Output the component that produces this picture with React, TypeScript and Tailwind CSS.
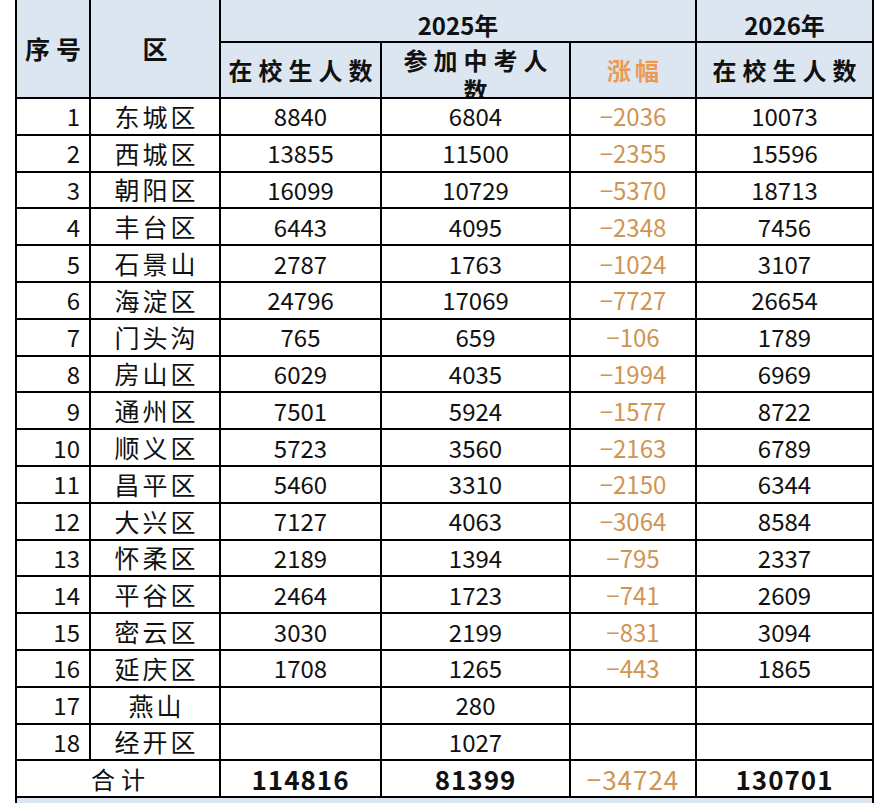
import React from "react";

type Row = [string, string, string, string, string, string];

const rows: Row[] = [
  ["1", "东城区", "8840", "6804", "−2036", "10073"],
  ["2", "西城区", "13855", "11500", "−2355", "15596"],
  ["3", "朝阳区", "16099", "10729", "−5370", "18713"],
  ["4", "丰台区", "6443", "4095", "−2348", "7456"],
  ["5", "石景山", "2787", "1763", "−1024", "3107"],
  ["6", "海淀区", "24796", "17069", "−7727", "26654"],
  ["7", "门头沟", "765", "659", "−106", "1789"],
  ["8", "房山区", "6029", "4035", "−1994", "6969"],
  ["9", "通州区", "7501", "5924", "−1577", "8722"],
  ["10", "顺义区", "5723", "3560", "−2163", "6789"],
  ["11", "昌平区", "5460", "3310", "−2150", "6344"],
  ["12", "大兴区", "7127", "4063", "−3064", "8584"],
  ["13", "怀柔区", "2189", "1394", "−795", "2337"],
  ["14", "平谷区", "2464", "1723", "−741", "2609"],
  ["15", "密云区", "3030", "2199", "−831", "3094"],
  ["16", "延庆区", "1708", "1265", "−443", "1865"],
  ["17", "燕山", "", "280", "", ""],
  ["18", "经开区", "", "1027", "", ""],
];

const head = "bg-[#dce6f1] flex items-center justify-center font-bold text-[24px] text-[#111]";
const cell = "bg-white flex items-center justify-center text-[24px] text-[#111] leading-none";

export default function App() {
  return (
    <div className="bg-white w-[890px] h-[804px] overflow-hidden font-['Noto_Sans_CJK_SC','Noto_Sans',sans-serif]">
      <div className="ml-[15px] w-[859px] grid grid-cols-[72px_128px_159px_187px_124px_175px] grid-rows-[41px_54px_repeat(19,34.8px)_5px] gap-[2px] bg-black px-[2px]">
        {/* header */}
        <div className={`${head} row-span-2 tracking-[6px] pl-[6px] text-[25px]`}>序号</div>
        <div className={`${head} row-span-2 text-[25px]`}>区</div>
        <div className={`${head} col-span-3 pt-2`}>2025年</div>
        <div className={`${head} pt-2`}>2026年</div>
        <div className={`${head} tracking-[6px] pl-[6px]`}>在校生人数</div>
        <div className="bg-[#dce6f1] overflow-hidden font-bold text-[24px] text-[#111] text-center leading-[30px] pt-[2px] tracking-[6px] pl-[6px]">
          参加中考人
          <br />数
        </div>
        <div className={`${head} text-[#ec9a52] tracking-[4px] pl-[4px]`}>涨幅</div>
        <div className={`${head} tracking-[6px] pl-[6px]`}>在校生人数</div>

        {/* data */}
        {rows.map((r) => (
          <React.Fragment key={r[0]}>
            <div className={`${cell} justify-end pr-[9px]`}>{r[0]}</div>
            <div className={`${cell} tracking-[3px] pl-[3px] text-[25px]`}>{r[1]}</div>
            <div className={cell}>{r[2]}</div>
            <div className={cell}>{r[3]}</div>
            <div className={`${cell} text-[#cf9552]`}>{r[4]}</div>
            <div className={cell}>{r[5]}</div>
          </React.Fragment>
        ))}

        {/* total */}
        <div className={`${cell} col-span-2 tracking-[6px] pl-[6px]`}>合计</div>
        <div className={`${cell} font-bold text-[26px] tracking-[1px]`}>114816</div>
        <div className={`${cell} font-bold text-[26px] tracking-[1px]`}>81399</div>
        <div className={`${cell} text-[26px] text-[#cf9552] tracking-[1px]`}>−34724</div>
        <div className={`${cell} font-bold text-[26px] tracking-[1px]`}>130701</div>

        <div className="bg-[#dce6f1] col-span-6" />
      </div>
    </div>
  );
}
